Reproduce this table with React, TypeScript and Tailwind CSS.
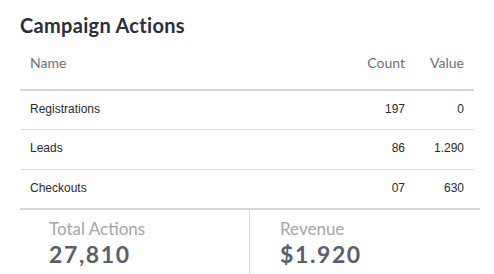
import React from "react";

interface ActionRow {
	name: string;
	count: string;
	value: string;
}

const rows: ActionRow[] = [
	{ name: "Registrations", count: "197", value: "0" },
	{ name: "Leads", count: "86", value: "1.290" },
	{ name: "Checkouts", count: "07", value: "630" },
];

const App: React.FC = () => {
	return (
		<div className="w-[494px] h-[274px] bg-white font-['Lato',sans-serif] overflow-hidden">
			<div className="pl-[20px] pr-[20px]">
				<h2 className="pt-[13px] text-[20px] leading-[24px] font-bold tracking-[0.3px] text-[#2c2e3d]">
					Campaign Actions
				</h2>

				<table className="w-[454px] border-collapse">
					<thead>
						<tr className="border-b-2 border-[#d5d6da]">
							<th className="pl-[10px] pt-[16px] pb-[16px] text-left text-[14px] leading-[20px] font-normal text-[#6e6f7c]">
								Name
							</th>
							<th className="w-[70px] pr-[10px] text-right text-[14px] leading-[20px] font-normal text-[#6e6f7c]">
								Count
							</th>
							<th className="w-[59px] pr-[10px] text-right text-[14px] leading-[20px] font-normal text-[#6e6f7c]">
								Value
							</th>
						</tr>
					</thead>
					<tbody className="font-['Liberation_Sans',Arial,sans-serif] text-[12px] leading-[16px] text-[#2b2b2b]">
						{rows.map((row, i) => {
							// middle row is one pixel taller in the reference
							const pad = i === 1 ? "pt-[10px] pb-[13px]" : "pt-[10px] pb-[12px]";
							return (
								<tr
									key={row.name}
									className={i < rows.length - 1 ? "border-b border-[#dcdde0]" : ""}
								>
									<td className={`pl-[10px] ${pad}`}>{row.name}</td>
									<td className={`pr-[10px] text-right ${pad}`}>{row.count}</td>
									<td className={`pr-[10px] text-right ${pad}`}>{row.value}</td>
								</tr>
							);
						})}
					</tbody>
				</table>
			</div>

			{/* summary footer */}
			<div className="ml-[20px] w-[460px] border-t-2 border-[#d5d6da] grid grid-cols-[230px_1fr]">
				<div className="border-r border-[#d5d6da] pl-[29px] pt-[9px] h-[64px]">
					<div className="text-[17px] leading-[20px] text-[#a3a4ad]">Total Actions</div>
					<div className="mt-[2px] text-[23px] leading-[26px] font-bold text-[#5b5e6c] tracking-[1.6px]">
						27,810
					</div>
				</div>
				<div className="pl-[30px] pt-[9px]">
					<div className="text-[17px] leading-[20px] text-[#a3a4ad]">Revenue</div>
					<div className="mt-[2px] text-[23px] leading-[26px] font-bold text-[#5b5e6c] tracking-[1.6px]">
						$1.920
					</div>
				</div>
			</div>
		</div>
	);
};

export default App;
